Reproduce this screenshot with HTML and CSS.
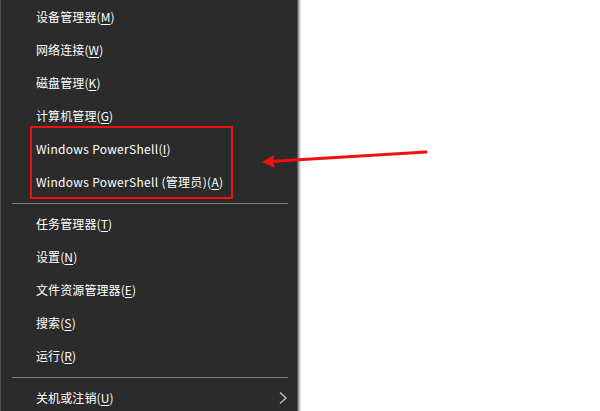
FILE: index.html
```html
<!DOCTYPE html>
<html lang="zh-CN">
<head>
<meta charset="utf-8">
<title>Win+X 菜单</title>
<link rel="stylesheet" href="styles.css">
</head>
<body>
<div class="stage">
  <nav class="menu">
    <div class="item">设备管理器(<u>M</u>)</div>
    <div class="item">网络连接(<u>W</u>)</div>
    <div class="item">磁盘管理(<u>K</u>)</div>
    <div class="item">计算机管理(<u>G</u>)</div>
    <div class="item latin">Windows PowerShell(<u>I</u>)</div>
    <div class="item latin">Windows PowerShell (管理员)(<u>A</u>)</div>
    <div class="sep"></div>
    <div class="item">任务管理器(<u>T</u>)</div>
    <div class="item">设置(<u>N</u>)</div>
    <div class="item">文件资源管理器(<u>E</u>)</div>
    <div class="item">搜索(<u>S</u>)</div>
    <div class="item">运行(<u>R</u>)</div>
    <div class="sep"></div>
    <div class="item has-sub">关机或注销(<u>U</u>)
      <svg class="chev" width="10" height="14" viewBox="0 0 10 14"><path d="M2 1.5 L8 7 L2 12.5" fill="none" stroke="#b8c4d0" stroke-width="1.3"/></svg>
    </div>
  </nav>
  <div class="highlight"></div>
  <svg class="arrow" width="600" height="411" viewBox="0 0 600 411">
    <path d="M426 152 L270 161.5" stroke="#f01010" stroke-width="3" stroke-linecap="round" fill="none"/>
    <path d="M262 162 L274 155 L273 162 L275 168 Z" fill="#f01010"/>
  </svg>
</div>
</body>
</html>
```
FILE: styles.css
```css
html, body {
  margin: 0;
  padding: 0;
  background: #ffffff;
}
.stage {
  position: relative;
  width: 600px;
  height: 411px;
  overflow: hidden;
}
.menu {
  width: 296px;
  height: 411px;
  background: #2b2b2b;
  border-left: 1px solid #4d4d4d;
  box-shadow: 1px 0 0 #5a5a5a, 2px 0 0 #8f8f8f, 3px 0 0 #c4c4c4, 4px 0 0 #e6e6e6;
  font-family: "Microsoft YaHei UI", "Noto Sans CJK SC", "Noto Sans", sans-serif;
  font-size: 12px;
  color: #ffffff;
  display: flex;
  flex-direction: column;
}
.item {
  height: 33px;
  line-height: 33px;
  padding-left: 35px;
  flex: none;
  position: relative;
  white-space: nowrap;
  letter-spacing: 0.1px;
}
.item.latin {
  letter-spacing: 0.3px;
}
.item u {
  text-underline-offset: 2px;
}
.sep {
  flex: none;
  height: 9px;
  display: flex;
  align-items: center;
  padding: 0 9px 0 11px;
}
.sep::before {
  content: "";
  display: block;
  flex: 1;
  height: 1px;
  background: #7f7f7f;
  margin-top: 1px;
}
.chev {
  position: absolute;
  left: 277px;
  top: 10px;
}
.highlight {
  position: absolute;
  left: 30px;
  top: 126px;
  width: 199px;
  height: 69px;
  border: 2px solid #f01010;
}
.arrow {
  position: absolute;
  left: 0;
  top: 0;
  pointer-events: none;
}
```
